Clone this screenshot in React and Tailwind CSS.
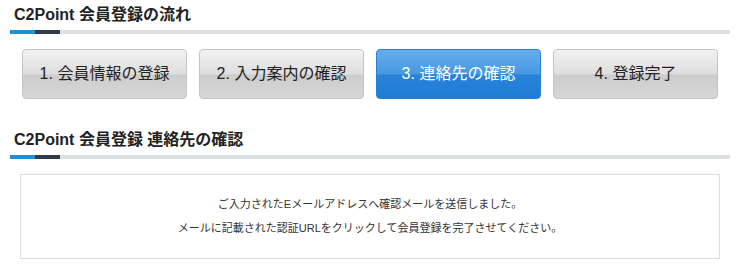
const steps = [
  { label: '1. 会員情報の登録', active: false },
  { label: '2. 入力案内の確認', active: false },
  { label: '3. 連絡先の確認', active: true },
  { label: '4. 登録完了', active: false },
];

function Heading({ children }) {
  return (
    <div className="pl-[10px] pr-[6px]">
      <h2 className="pl-[4px] h-[30px] flex items-center text-[16px] font-bold text-[#222] leading-none">
        {children}
      </h2>
      <div className="flex h-[4px]">
        <div className="w-[25px] bg-[#1f8fd6]" />
        <div className="w-[25px] bg-[#333a4a]" />
        <div className="flex-1 bg-[#dde0e3]" />
      </div>
    </div>
  );
}

export default function App() {
  return (
    <div
      className="w-[736px] h-[266px] bg-white overflow-hidden"
      style={{ fontFamily: '"Liberation Sans", "Noto Sans CJK JP", sans-serif' }}
    >
      <Heading>C2Point 会員登録の流れ</Heading>

      <div className="flex gap-[12px] pl-[22px] mt-[15px]">
        {steps.map(s => (
          <div
            key={s.label}
            className={`w-[165px] h-[50px] rounded-[4px] border flex items-center justify-center text-[16px] font-normal ${
              s.active
                ? 'border-[#2a7fcf] text-white bg-[linear-gradient(to_bottom,#66aeec_0%,#4598e1_50%,#2a83d8_52%,#1f7bd4_100%)]'
                : 'border-[#c4c4c4] text-[#222] bg-[linear-gradient(to_bottom,#f2f2f2_0%,#dedede_50%,#cdcdcd_52%,#d6d6d6_100%)]'
            }`}
          >
            {s.label}
          </div>
        ))}
      </div>

      <div className="mt-[26px]">
        <Heading>C2Point 会員登録 連絡先の確認</Heading>
      </div>

      <div className="ml-[20px] mt-[15px] w-[700px] h-[85px] border border-[#dcdcdc] flex flex-col items-center justify-center gap-[13px] text-[11px] text-[#333] leading-none">
        <p>ご入力されたEメールアドレスへ確認メールを送信しました。</p>
        <p>メールに記載された認証URLをクリックして会員登録を完了させてください。</p>
      </div>
    </div>
  );
}
